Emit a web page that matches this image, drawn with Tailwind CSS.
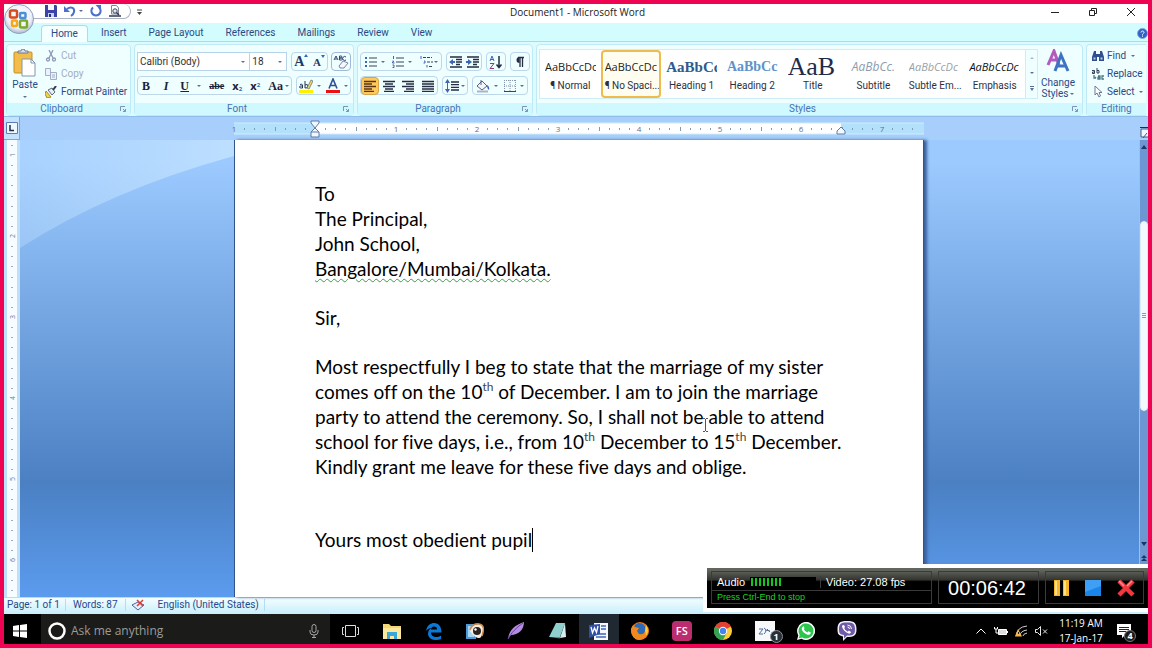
<!DOCTYPE html>
<html lang="en">
  <head>
    <meta charset="UTF-8" />
    <meta name="viewport" content="width=device-width, initial-scale=1.0" />
    <title>Document1 - Microsoft Word</title>
    <script src="https://cdn.jsdelivr.net/npm/@tailwindcss/browser@4"></script>
  </head>
  <body class="h-screen flex flex-col overflow-hidden border-4 border-[#ee0452] bg-white font-['Roboto',sans-serif] text-[10px] leading-3 text-[#2a4a86]">
    <!-- Word window -->
    <div class="relative flex-1 min-h-0 flex flex-col">
      <!-- Title bar -->
      <header class="relative h-[19px] shrink-0 flex items-center bg-white">
        <div class="ml-[26px] h-[15px] w-[101px] pl-[15px] mb-1 flex items-center gap-[7px] rounded-r-full border-b border-r border-[#a9b4c6]">
          <button aria-label="Save">
            <svg class="w-3 h-3" viewBox="0 0 12 12"><path d="M0 0h11l1 1v11H0z" fill="#3c43a6"/><path d="M3 0h6v5H3z" fill="#f4f6ff"/><path d="M3 8h6v4H3z" fill="#c8d2f2"/><path d="M4 9h2v3H4z" fill="#2b2f7c"/></svg>
          </button>
          <button aria-label="Undo" class="flex items-center gap-[3px]">
            <svg class="w-3 h-3" viewBox="0 0 12 12"><path d="M3 4c4-3 8-1 7 3-.4 2-1.500 3-3 4" fill="none" stroke="#4a72cc" stroke-width="2"/><path d="M0 1v6h6z" fill="#4a72cc"/></svg>
            <svg class="w-1 h-1" viewBox="0 0 4 4"><path d="M0 1h4L2 3z" fill="#5b6f96"/></svg>
          </button>
          <button aria-label="Repeat">
            <svg class="w-3 h-3" viewBox="0 0 12 12"><path d="M3 2.500C0 5 1.500 10.500 6 10.500S12 5 9 2.500" fill="none" stroke="#4a72cc" stroke-width="2"/><path d="M5.500 0H11v5.500z" fill="#4a72cc"/></svg>
          </button>
          <button aria-label="Print preview">
            <svg class="w-3 h-3" viewBox="0 0 12 12"><path d="M2.500.5h5l2 2.500v6h-7z" fill="#fff" stroke="#7d8799"/><circle cx="6" cy="6" r="2.200" fill="#dce8f7" stroke="#3c4658"/><path d="M7.500 7.500L10 10" stroke="#30384a" stroke-width="1.500"/><path d="M0 11h12" stroke="#30384a" stroke-width="1.500"/></svg>
          </button>
        </div>
        <svg class="ml-[6px] mb-1 w-[5px] h-2" viewBox="0 0 5 8"><path d="M0 2h5" stroke="#444"/><path d="M0 4h5L2.500 7z" fill="#444"/></svg>
        <h1 class="absolute inset-x-0 top-[2px] pl-[3px] text-center font-['Open_Sans',sans-serif] text-[#222] pointer-events-none">Document1 - Microsoft Word</h1>
        <div class="ml-auto mb-1 mr-[13px] flex items-center gap-[30px]">
          <button aria-label="Minimize"><svg class="w-2 h-2" viewBox="0 0 8 8"><path d="M0 4.500h8" stroke="#222"/></svg></button>
          <button aria-label="Restore"><svg class="w-2 h-2" viewBox="0 0 8 8"><path d="M.5 2.500h5v5h-5zM2.500 2V.5h5v5H6" fill="none" stroke="#222"/></svg></button>
          <button aria-label="Close"><svg class="w-2 h-2" viewBox="0 0 8 8"><path d="M0 0l8 8M8 0L0 8" stroke="#222"/></svg></button>
        </div>
      </header>

      <!-- Office button -->
      <button aria-label="Office" class="absolute z-10 left-0 top-0">
        <svg class="w-[31px] h-[31px]" viewBox="0 0 31 31">
          <defs><radialGradient id="orb" cx=".5" cy=".4" r=".6"><stop offset="0" stop-color="#fff"/><stop offset=".7" stop-color="#eef1f7"/><stop offset="1" stop-color="#a9b7cd"/></radialGradient></defs>
          <circle cx="15" cy="15" r="14.500" fill="url(#orb)" stroke="#8fa3c2"/>
          <g fill="none" stroke-width="2.500">
            <rect x="6" y="6.500" width="7" height="7" rx="1.500" stroke="#d8491c"/>
            <rect x="16" y="9" width="5.500" height="5" rx="1" stroke="#4c8fd8"/>
            <rect x="8" y="16.500" width="5" height="5.500" rx="1" stroke="#f3a91a"/>
            <rect x="16" y="16.500" width="7" height="7" rx="1.500" stroke="#7aa92c"/>
          </g>
        </svg>
      </button>

      <!-- Tabs -->
      <nav class="h-[19px] shrink-0 pt-[2px] pl-[37px] flex items-center bg-[#d3fcff] border-b border-[#a5dcee]">
        <a href="#" class="h-[17px] px-[9px] mr-[2px] flex items-center rounded-t-sm border border-b-0 border-[#a9dcee] bg-[#f4ffff]">Home</a>
        <a href="#" class="px-[11px]">Insert</a>
        <a href="#" class="px-[11px]">Page Layout</a>
        <a href="#" class="px-[11px]">References</a>
        <a href="#" class="px-[11px]">Mailings</a>
        <a href="#" class="px-[11px]">Review</a>
        <a href="#" class="px-[11px]">View</a>
        <button aria-label="Help" class="ml-auto"><svg class="w-[11px] h-[11px]" viewBox="0 0 11 11"><circle cx="5.500" cy="5.500" r="5" fill="#2e62c4" stroke="#7fa8e6"/><path d="M4 4.500c0-2 3-2 3 0 0 1-1.500 1-1.500 2.200M5.500 7.500v1.200" fill="none" stroke="#fff"/></svg></button>
      </nav>

      <!-- Ribbon -->
      <div class="h-[75px] shrink-0 pt-[2px] px-[2px] flex gap-[3px] bg-[#dbfbff] border-b border-[#8fbfe8] overflow-hidden">
        <!-- Clipboard -->
        <section class="w-[125px] shrink-0 flex flex-col rounded-sm border border-[#bfeaf5] bg-[#effeff]">
          <div class="flex-1 min-h-0 flex">
            <button class="w-9 pt-1 flex flex-col items-center">
              <svg class="w-6 h-7" viewBox="0 0 24 28"><rect x="1" y="3" width="18" height="21" rx="1" fill="#f2bd4a" stroke="#c58f26"/><path d="M5 4h10V2h-3a2 2 0 00-4 0H5z" fill="#d9dee6" stroke="#70798a"/><path d="M9 10h9l4 4v13H9z" fill="#fff" stroke="#8494ae"/><path d="M18 10v4h4" fill="none" stroke="#8494ae"/></svg>
              <span class="mt-[2px]">Paste</span>
              <svg class="mt-1 w-1 h-1" viewBox="0 0 4 4"><path d="M0 1h4L2 3z" fill="#5b6f96"/></svg>
            </button>
            <div class="pt-[2px] pl-[2px] flex flex-col">
              <button class="h-[18px] flex items-center gap-1 text-[#a3adbf]"><svg class="w-3 h-3" viewBox="0 0 12 12" fill="none" stroke="#8e99b5" stroke-width="1.300"><path d="M4 0l4 8M8 0L4 8"/><circle cx="3" cy="9.500" r="1.500"/><circle cx="9" cy="9.500" r="1.500"/></svg>Cut</button>
              <button class="h-[18px] flex items-center gap-1 text-[#a3adbf]"><svg class="w-3 h-3" viewBox="0 0 12 12" fill="#edf2fa" stroke="#a1aec8"><path d="M.5.5h5v7h-5zM5.500 4.500h6v7h-6z"/><path d="M7 7h3M7 9h3"/></svg>Copy</button>
              <button class="h-[18px] flex items-center gap-1 whitespace-nowrap"><svg class="w-3 h-3" viewBox="0 0 12 12"><path d="M1 5l5 6-4 1-2-4z" fill="#f5d34f" stroke="#a98a22"/><path d="M3 4l4 5 3-3-3-4z" fill="#e9edf4" stroke="#5d677c"/><path d="M8 4l3-4" stroke="#333c50" stroke-width="2"/></svg>Format Painter</button>
            </div>
          </div>
          <div class="h-3 shrink-0 flex items-center bg-[#d0f8ff] text-[#4873b4]">
            <span class="flex-1 text-center pr-1">Clipboard</span>
            <button aria-label="Clipboard options" class="pr-1"><svg class="w-[6px] h-[6px]" viewBox="0 0 6 6" fill="none" stroke="#7d93b8"><path d="M.5 5V.5H5M3 3l2.500 2.500M5.500 3v2.500H3"/></svg></button>
          </div>
        </section>

        <!-- Font -->
        <section class="w-[220px] shrink-0 flex flex-col rounded-sm border border-[#bfeaf5] bg-[#effeff]">
          <div class="flex-1 min-h-0 px-[2px] pt-[7px] flex flex-col gap-[5px]">
            <div class="h-[19px] flex items-center">
              <label class="relative w-[115px] h-[19px] flex items-center border border-[#b8d3e8] bg-white">
                <select aria-label="Font" class="w-full h-full px-[2px] appearance-none bg-transparent text-[#333]"><option>Calibri (Body)</option></select>
                <svg class="absolute right-1 w-1 h-1 pointer-events-none" viewBox="0 0 4 4"><path d="M0 1h4L2 3z" fill="#5b6f96"/></svg>
              </label>
              <label class="relative w-[37px] h-[19px] flex items-center border border-l-0 border-[#b8d3e8] bg-white">
                <select aria-label="Font size" class="w-full h-full px-[2px] appearance-none bg-transparent text-[#333]"><option>18</option></select>
                <svg class="absolute right-1 w-1 h-1 pointer-events-none" viewBox="0 0 4 4"><path d="M0 1h4L2 3z" fill="#5b6f96"/></svg>
              </label>
              <div class="ml-1 w-[38px] h-[19px] flex items-center justify-around rounded-sm border border-[#bcd6ea] font-['Liberation_Serif',serif] font-bold text-[#27385e]">
                <button aria-label="Grow font" class="flex items-start text-[14px] leading-4">A<svg class="w-1 h-1" viewBox="0 0 4 4"><path d="M0 3h4L2 0z" fill="#3566b8"/></svg></button>
                <button aria-label="Shrink font" class="flex items-start text-[11px] leading-4">A<svg class="w-1 h-1" viewBox="0 0 4 4"><path d="M0 1h4L2 4z" fill="#3566b8"/></svg></button>
              </div>
              <button aria-label="Clear formatting" class="ml-[3px] w-[20px] h-[19px] grid place-items-center rounded-sm border border-[#9fb9d8]">
                <svg class="w-4 h-4" viewBox="0 0 16 16"><path d="M1 6l2-4 2 4M2 5h2M6.500 2v4h2a1 1 0 000-2h-2 1.500a1 1 0 000-2zM13 3a2 2 0 100 3" fill="none" stroke="#33466e"/><path d="M6 12l4-5 5 2-4 5H7z" fill="#f6f7fc" stroke="#7886a8"/></svg>
              </button>
            </div>
            <div class="h-[19px] flex items-center">
              <div class="w-[155px] h-[19px] pl-[2px] pr-[2px] flex items-center justify-between rounded-sm border border-[#bcd6ea] font-['Liberation_Serif',serif] text-[12px] text-[#1a2238]">
                <button class="w-3 font-bold">B</button>
                <button class="w-3 font-bold italic">I</button>
                <button class="flex items-center gap-2 font-bold"><span class="underline">U</span><svg class="w-1 h-1" viewBox="0 0 4 4"><path d="M0 1h4L2 3z" fill="#5b6f96"/></svg></button>
                <button class="text-[10px] font-bold line-through">abe</button>
                <button class="font-bold font-['Open_Sans',sans-serif] text-[11px]">x<sub class="text-[6px] text-[#3566b8]">2</sub></button>
                <button class="font-bold font-['Open_Sans',sans-serif] text-[11px]">x<sup class="text-[6px] text-[#3566b8]">2</sup></button>
                <button class="flex items-center gap-[2px] font-bold">Aa<svg class="w-1 h-1" viewBox="0 0 4 4"><path d="M0 1h4L2 3z" fill="#5b6f96"/></svg></button>
              </div>
              <div class="ml-1 w-[55px] h-[19px] flex items-center justify-around rounded-sm border border-[#bcd6ea]">
                <button aria-label="Highlight" class="flex items-center gap-1"><svg class="w-[14px] h-4" viewBox="0 0 14 16"><path d="M0 12h14v3H0z" fill="#fdf000"/><path d="M1 6.500q2-1 2.500.5v3q-3 .5-3-1t3-1M6 3v7q3 .5 3-2T6 7" fill="none" stroke="#2a3658"/><path d="M8 10l4-8 2 1-4 8z" fill="#f6d860" stroke="#5a6275" stroke-width=".7"/></svg><svg class="w-1 h-1" viewBox="0 0 4 4"><path d="M0 1h4L2 3z" fill="#5b6f96"/></svg></button>
                <button aria-label="Font color" class="flex items-center gap-1"><svg class="w-[14px] h-4" viewBox="0 0 14 16"><path d="M0 12h14v3H0z" fill="#ee1111"/><path d="M3 10.500L7 1l4 9.500M4.500 7.500h5" fill="none" stroke="#2c4f96" stroke-width="1.600"/></svg><svg class="w-1 h-1" viewBox="0 0 4 4"><path d="M0 1h4L2 3z" fill="#5b6f96"/></svg></button>
              </div>
            </div>
          </div>
          <div class="h-3 shrink-0 flex items-center bg-[#d0f8ff] text-[#4873b4]">
            <span class="flex-1 text-center pr-1">Font</span>
            <button aria-label="Font options" class="pr-1"><svg class="w-[6px] h-[6px]" viewBox="0 0 6 6" fill="none" stroke="#7d93b8"><path d="M.5 5V.5H5M3 3l2.500 2.500M5.500 3v2.500H3"/></svg></button>
          </div>
        </section>

        <!-- Paragraph -->
        <section class="w-[176px] shrink-0 flex flex-col rounded-sm border border-[#bfeaf5] bg-[#effeff]">
          <div class="flex-1 min-h-0 px-[2px] pt-[7px] flex flex-col gap-[5px]">
            <div class="h-[19px] flex items-center gap-1">
              <div class="w-[83px] h-[19px] flex items-center justify-around rounded-sm border border-[#bcd6ea]">
                <button aria-label="Bullets" class="flex items-center gap-1"><svg class="w-3 h-3" viewBox="0 0 12 12"><path d="M0 1h2v2H0zM0 5h2v2H0zM0 9h2v2H0z" fill="#3c65b4"/><path d="M4 2h8M4 6h8M4 10h8" stroke="#39435c"/></svg><svg class="w-1 h-1" viewBox="0 0 4 4"><path d="M0 1h4L2 3z" fill="#5b6f96"/></svg></button>
                <button aria-label="Numbering" class="flex items-center gap-1"><svg class="w-3 h-3" viewBox="0 0 12 12"><path d="M1.500 0v3M.5 5h1v1h-1v1h2M.5 9h1.500v2.500H.5" fill="none" stroke="#3c65b4"/><path d="M4 2h8M4 6h8M4 10h8" stroke="#39435c"/></svg><svg class="w-1 h-1" viewBox="0 0 4 4"><path d="M0 1h4L2 3z" fill="#5b6f96"/></svg></button>
                <button aria-label="Multilevel list" class="flex items-center"><svg class="w-[14px] h-3" viewBox="0 0 14 12"><path d="M1 0v3M4 5h1v2H3.500M7 9v2.500" fill="none" stroke="#3c65b4"/><path d="M3 1.500h9M7 6h6M9 10.500h4" stroke="#39435c" stroke-dasharray="3 1"/></svg><svg class="w-1 h-1" viewBox="0 0 4 4"><path d="M0 1h4L2 3z" fill="#5b6f96"/></svg></button>
              </div>
              <div class="w-9 h-[19px] flex items-center justify-around rounded-sm border border-[#bcd6ea]">
                <button aria-label="Decrease indent"><svg class="w-[14px] h-3" viewBox="0 0 14 12"><path d="M1 1h12M7 3.500h6M7 6h6M7 8.500h4M1 11h12" stroke="#252d42" stroke-width="1.300"/><path d="M0 6l4-3v2h2v2H4v2z" fill="#3c65b4"/></svg></button>
                <button aria-label="Increase indent"><svg class="w-[14px] h-3" viewBox="0 0 14 12"><path d="M1 1h12M7 3.500h6M7 6h6M7 8.500h4M1 11h12" stroke="#252d42" stroke-width="1.300"/><path d="M6 6L2 3v2H0v2h2v2z" fill="#3c65b4"/></svg></button>
              </div>
              <button aria-label="Sort" class="w-5 h-[19px] grid place-items-center rounded-sm border border-[#bcd6ea]"><svg class="w-[14px] h-[14px]" viewBox="0 0 14 14" fill="none"><path d="M1 6l2-5 2 5M1.500 4.500h3" stroke="#3c65b4"/><path d="M1 8.500h4l-4 5h4" stroke="#8b3b86"/><path d="M10 1v11M7.500 9.500L10 12.500l2.500-3" stroke="#252d42" stroke-width="1.500"/></svg></button>
              <button aria-label="Show marks" class="w-5 h-[19px] grid place-items-center rounded-sm border border-[#bcd6ea]"><svg class="w-3 h-3" viewBox="0 0 12 12"><path d="M5.500 7A3 3 0 015.500 1z" fill="#252d42"/><path d="M4 1.500h6M6 1v10M8.500 1v10" stroke="#252d42" stroke-width="1.300"/></svg></button>
            </div>
            <div class="h-[19px] flex items-center gap-1">
              <div class="w-[78px] h-[19px] flex items-center rounded-sm border border-[#bcd6ea]">
                <button aria-label="Align left" class="w-[18px] h-[18px] grid place-items-center rounded-sm border border-[#d9a54a] bg-[#ffc95c]"><svg class="w-3 h-3" viewBox="0 0 12 12"><path d="M0 1.500h12M0 4h8M0 6.500h12M0 9h8M0 11.500h10" stroke="#5b3413" stroke-width="1.300"/></svg></button>
                <button aria-label="Center" class="w-[20px] grid place-items-center"><svg class="w-3 h-3" viewBox="0 0 12 12"><path d="M0 1.500h12M2 4h8M0 6.500h12M2 9h8M1 11.500h10" stroke="#252d42" stroke-width="1.300"/></svg></button>
                <button aria-label="Align right" class="w-[20px] grid place-items-center"><svg class="w-3 h-3" viewBox="0 0 12 12"><path d="M0 1.500h12M4 4h8M0 6.500h12M4 9h8M2 11.500h10" stroke="#252d42" stroke-width="1.300"/></svg></button>
                <button aria-label="Justify" class="w-[19px] grid place-items-center"><svg class="w-3 h-3" viewBox="0 0 12 12"><path d="M0 1.500h12M0 4h12M0 6.500h12M0 9h12M0 11.500h12" stroke="#252d42" stroke-width="1.300"/></svg></button>
              </div>
              <button aria-label="Line spacing" class="w-[26px] h-[19px] flex items-center justify-center gap-[2px] rounded-sm border border-[#bcd6ea]"><svg class="w-[14px] h-[14px]" viewBox="0 0 14 14"><path d="M2.500 1v12" stroke="#3c65b4"/><path d="M0 4l2.500-4L5 4zM0 10l2.500 4L5 10z" fill="#3c65b4"/><path d="M6 3h8M6 5.700h8M6 8.400h8M6 11h8" stroke="#252d42" stroke-width="1.300"/></svg><svg class="w-1 h-1" viewBox="0 0 4 4"><path d="M0 1h4L2 3z" fill="#5b6f96"/></svg></button>
              <div class="w-[56px] h-[19px] flex items-center justify-around rounded-sm border border-[#bcd6ea]">
                <button aria-label="Shading" class="flex items-center gap-1"><svg class="w-[14px] h-[14px]" viewBox="0 0 14 14"><path d="M1 7l5-5 5 5-5 4z" fill="#f3f6fb" stroke="#55627f"/><path d="M5 1v5" stroke="#55627f"/><path d="M11 6q3 2 2 5-2-1-2-5" fill="#3c65b4"/><path d="M1 12.500h11" stroke="#aab4c6" stroke-width="2"/></svg><svg class="w-1 h-1" viewBox="0 0 4 4"><path d="M0 1h4L2 3z" fill="#5b6f96"/></svg></button>
                <button aria-label="Borders" class="flex items-center gap-1"><svg class="w-3 h-3" viewBox="0 0 12 12"><path d="M.5 0v12M6 0v12M11.500 0v12M0 .5h12M0 6h12" stroke="#8593ac" stroke-dasharray="1 1"/><path d="M0 11.500h12" stroke="#39435c"/></svg><svg class="w-1 h-1" viewBox="0 0 4 4"><path d="M0 1h4L2 3z" fill="#5b6f96"/></svg></button>
              </div>
            </div>
          </div>
          <div class="h-3 shrink-0 flex items-center bg-[#d0f8ff] text-[#4873b4]">
            <span class="flex-1 text-center pr-1">Paragraph</span>
            <button aria-label="Paragraph options" class="pr-1"><svg class="w-[6px] h-[6px]" viewBox="0 0 6 6" fill="none" stroke="#7d93b8"><path d="M.5 5V.5H5M3 3l2.500 2.500M5.500 3v2.500H3"/></svg></button>
          </div>
        </section>

        <!-- Styles -->
        <section class="flex-1 min-w-0 flex flex-col rounded-sm border border-[#bfeaf5] bg-[#effeff]">
          <div class="flex-1 min-h-0 pl-[2px] pr-1 pt-1 flex">
            <div class="flex-1 min-w-0 h-[50px] flex border border-[#cdeef6] bg-white">
              <div class="flex-1 min-w-0 grid grid-cols-8 text-center text-[#2b3142]">
                <button class="min-w-0 px-[3px] pt-[3px] flex flex-col justify-start overflow-hidden whitespace-nowrap border-2 border-transparent"><span class="block h-6 leading-6 overflow-hidden text-left font-['Open_Sans',sans-serif] text-[11px] text-[#222]">AaBbCcDc</span><span class="block pt-px">¶ Normal</span></button>
                <button class="min-w-0 px-[2px] pt-[3px] flex flex-col justify-start overflow-hidden whitespace-nowrap rounded-sm border-2 border-[#eebb4c] bg-[#fffdf0]"><span class="block h-6 leading-6 overflow-hidden text-left font-['Open_Sans',sans-serif] text-[11px] text-[#222]">AaBbCcDc</span><span class="block pt-px">¶ No Spaci...</span></button>
                <button class="min-w-0 px-[3px] pt-[3px] flex flex-col justify-start overflow-hidden whitespace-nowrap border-2 border-transparent"><span class="block h-6 leading-6 overflow-hidden text-left font-['Liberation_Serif',serif] font-bold text-[15px] text-[#2f5a8c]">AaBbCc</span><span class="block pt-px">Heading 1</span></button>
                <button class="min-w-0 px-[3px] pt-[3px] flex flex-col justify-start overflow-hidden whitespace-nowrap border-2 border-transparent"><span class="block h-6 leading-6 overflow-hidden text-left font-['Liberation_Serif',serif] font-bold text-[14px] text-[#5e92cc]">AaBbCc</span><span class="block pt-px">Heading 2</span></button>
                <button class="min-w-0 px-[3px] pt-[3px] flex flex-col justify-start overflow-hidden whitespace-nowrap border-2 border-transparent"><span class="block h-6 leading-6 overflow-hidden text-left font-['Liberation_Serif',serif] text-[26px] text-[#1e2b4a]">AaB</span><span class="block pt-px">Title</span></button>
                <button class="min-w-0 px-[3px] pt-[3px] flex flex-col justify-start overflow-hidden whitespace-nowrap border-2 border-transparent"><span class="block h-6 leading-6 overflow-hidden font-['Open_Sans',sans-serif] italic text-[12px] text-[#8c9cb0]">AaBbCc.</span><span class="block pt-px">Subtitle</span></button>
                <button class="min-w-0 px-[3px] pt-[3px] flex flex-col justify-start overflow-hidden whitespace-nowrap border-2 border-transparent"><span class="block h-6 leading-6 overflow-hidden text-left font-['Open_Sans',sans-serif] italic text-[11px] text-[#9a9fa8]">AaBbCcDc</span><span class="block pt-px">Subtle Em...</span></button>
                <button class="min-w-0 px-[3px] pt-[3px] flex flex-col justify-start overflow-hidden whitespace-nowrap border-2 border-transparent"><span class="block h-6 leading-6 overflow-hidden text-left font-['Open_Sans',sans-serif] italic text-[11px] text-[#111]">AaBbCcDc</span><span class="block pt-px">Emphasis</span></button>
              </div>
              <div class="w-3 flex flex-col items-center justify-around border-l border-[#cdeef6] bg-[#effeff]">
                <button aria-label="Previous styles"><svg class="w-1 h-1" viewBox="0 0 4 4"><path d="M0 3h4L2 1z" fill="#a9b6cc"/></svg></button>
                <button aria-label="Next styles"><svg class="w-1 h-1" viewBox="0 0 4 4"><path d="M0 1h4L2 3z" fill="#5b6f96"/></svg></button>
                <button aria-label="More styles"><svg class="w-1 h-[6px]" viewBox="0 0 4 6"><path d="M0 .5h4" stroke="#5b6f96"/><path d="M0 2h4L2 5z" fill="#5b6f96"/></svg></button>
              </div>
            </div>
            <button class="w-10 flex flex-col items-center justify-start">
              <svg class="w-6 h-6 shrink-0" viewBox="0 0 24 24" fill="none" stroke-width="3"><path d="M2 16L8 2l5 14M4 11h8" stroke="#b35bbb"/><path d="M9 22l6-16 7 16M11 17h9" stroke="#3f72c0"/></svg>
              <span class="mt-1 leading-[11px]">Change</span>
              <span class="flex items-center gap-[2px] leading-[11px]">Styles<svg class="w-1 h-1" viewBox="0 0 4 4"><path d="M0 1h4L2 3z" fill="#5b6f96"/></svg></span>
            </button>
          </div>
          <div class="h-3 shrink-0 flex items-center bg-[#d0f8ff] text-[#4873b4]">
            <span class="flex-1 text-center pr-1">Styles</span>
            <button aria-label="Styles options" class="pr-1"><svg class="w-[6px] h-[6px]" viewBox="0 0 6 6" fill="none" stroke="#7d93b8"><path d="M.5 5V.5H5M3 3l2.500 2.500M5.500 3v2.500H3"/></svg></button>
          </div>
        </section>

        <!-- Editing -->
        <section class="w-[60px] shrink-0 flex flex-col rounded-l-sm border border-r-0 border-[#bfeaf5] bg-[#effeff]">
          <div class="flex-1 min-h-0 pt-[2px] pl-[5px] flex flex-col whitespace-nowrap">
            <button class="h-[18px] flex items-center gap-[3px]"><svg class="w-3 h-3 shrink-0" viewBox="0 0 12 12"><path d="M2 1h2v3h4V1h2l2 6v4H7V7H5v4H0V7z" fill="#2f4f8e"/><path d="M1.500 7.500h2v2h-2zM8.500 7.500h2v2h-2z" fill="#b9cdf0"/></svg>Find<svg class="ml-[2px] w-1 h-1" viewBox="0 0 4 4"><path d="M0 1h4L2 3z" fill="#5b6f96"/></svg></button>
            <button class="h-[18px] flex items-center gap-[3px]"><svg class="w-3 h-3 shrink-0" viewBox="0 0 12 12" fill="none"><path d="M0 2.500h2.500v3H.5v-1.500h2M5 0v5h2V2.500H5" stroke="#333f5c"/><path d="M2 7v3h2M4 9l-1 1M6 8h2v3H6V9.500h2M12 8h-2v3h2" stroke="#4c7a86" stroke-width="1.300"/></svg>Replace</button>
            <button class="h-[18px] flex items-center gap-[3px]"><svg class="w-3 h-3 shrink-0" viewBox="0 0 12 12"><path d="M3 0v9l2-2 2 4 1.500-1L7 6.500h3z" fill="#fff" stroke="#6c7a96"/></svg>Select<svg class="ml-[2px] w-1 h-1" viewBox="0 0 4 4"><path d="M0 1h4L2 3z" fill="#5b6f96"/></svg></button>
          </div>
          <div class="h-3 shrink-0 grid place-items-center bg-[#d0f8ff] text-[#4873b4]">Editing</div>
        </section>
      </div>

      <!-- Horizontal ruler -->
      <div class="h-[23px] shrink-0 flex bg-[#a8cffb]">
        <button aria-label="Tab stop" class="w-4 flex items-center justify-center border-b border-r border-[#7fa6d8] bg-[#c4e2fb]"><svg class="w-3 h-3" viewBox="0 0 12 12"><path d="M.5.5h11v11H.5z" fill="#eef8ff" stroke="#5b7cb4"/><path d="M4 3v5.500h4" fill="none" stroke="#222c44" stroke-width="1.500"/></svg></button>
        <div class="flex-1 flex justify-center pt-1 pr-px">
          <svg id="hruler" class="w-[690px] h-[18px] overflow-visible font-['Open_Sans',sans-serif] text-[8px]" viewBox="0 0 690 18"></svg>
        </div>
        <button aria-label="View ruler" class="w-[9px] pt-2 overflow-hidden"><svg class="w-[10px] h-[12px]" viewBox="0 0 10 12"><path d="M2 2h8v8H2z" fill="#eef6ff" stroke="#44587e"/><path d="M4 11l4-5" stroke="#44587e"/><path d="M1 0h9" stroke="#1c2e55" stroke-width="2"/></svg></button>
      </div>

      <!-- Workspace -->
      <div class="flex-1 min-h-0 flex bg-linear-to-b from-[#9ccaff] from-5% via-[#4b80c3] via-75% to-[#5b9bee]">
        <div class="w-4 shrink-0 px-[3px] bg-[#bfe0fb]">
          <svg id="vruler" class="w-[10px] h-full bg-[#f6fcff] font-['Open_Sans',sans-serif] text-[7px]"></svg>
        </div>
        <main class="relative flex-1 min-w-0 flex justify-center pr-px">
          <svg class="absolute left-0 top-0 w-[214px] h-[110px]" viewBox="0 0 214 110" preserveAspectRatio="none">
            <defs><linearGradient id="sweep" x1="0" y1="0" x2="1" y2="0"><stop offset="0" stop-color="#bfe0ff" stop-opacity=".35"/><stop offset="1" stop-color="#c8e6ff" stop-opacity=".75"/></linearGradient></defs>
            <path d="M0 0h214v16Q90 50 0 108z" fill="url(#sweep)"/>
          </svg>
          <article contenteditable="true" spellcheck="false" class="relative w-[690px] h-full overflow-hidden pl-[80px] pr-16 pt-[41px] bg-white border-x border-[#33558c] shadow-[3px_0_3px_#3a5f9c] font-['Lato',sans-serif] text-[19px] leading-[25px] text-black outline-none [font-variant-ligatures:none]">
            <p>To</p>
            <p>The Principal,</p>
            <p>John School,</p>
            <p><span class="underline decoration-wavy decoration-[#3f9a4d] decoration-1 underline-offset-2">Bangalore/Mumbai/Kolkata.</span></p>
            <p class="h-6"></p>
            <p>Sir,</p>
            <p class="h-6"></p>
            <p class="whitespace-nowrap">Most respectfully I beg to state that the marriage of my sister<br />comes off on the 10<sup class="-top-2 text-[12px] text-[#444]">th</sup> of December. I am to join the marriage<br />party to attend the ceremony. So, I shall not be able to attend<br />school for five days, i.e., from 10<sup class="-top-2 text-[12px] text-[#444]">th</sup> December to 15<sup class="-top-2 text-[12px] text-[#444]">th</sup> December.<br />Kindly grant me leave for these five days and oblige.</p>
            <p class="h-6"></p>
            <p class="h-6"></p>
            <p class="flex items-center">Yours most obedient pupil<span class="w-px h-6 bg-black"></span></p>
          </article>
          <!-- Mouse pointer -->
          <svg class="absolute left-[682px] top-[278px] w-[7px] h-[14px]" viewBox="0 0 7 14"><path d="M1 .5h2M4 .5h2M3.500 1v12M1 13.500h2M4 13.500h2" fill="none" stroke="#555"/></svg>
        </main>
        <!-- Scrollbar -->
        <div class="w-[9px] shrink-0 flex flex-col items-center bg-[#6d97d2] border-l border-[#9cc0ee]">
          <button aria-label="Scroll up" class="h-[14px]"><svg class="w-2 h-2" viewBox="0 0 8 8"><path d="M1 6h6L4 2z" fill="#1d3764"/></svg></button>
          <div class="h-[67px]"></div>
          <div class="w-full h-[190px] grid place-items-center rounded-sm border border-[#dcebfb] bg-[#f2f9ff]"><svg class="w-1 h-2" viewBox="0 0 4 8"><path d="M0 1.500h4M0 3.500h4M0 5.500h4" stroke="#7e9cc8"/></svg></div>
          <div class="flex-1"></div>
          <button aria-label="Scroll down" class="h-[14px]"><svg class="w-2 h-2" viewBox="0 0 8 8"><path d="M1 2h6L4 6z" fill="#1d3764"/></svg></button>
          <button aria-label="Previous page" class="h-[14px] mb-8"><svg class="w-2 h-2" viewBox="0 0 8 8"><path d="M1 4h6L4 1zM1 7h6L4 4z" fill="#1d3764"/></svg></button>
        </div>
      </div>

      <!-- Status bar -->
      <footer class="h-[17px] shrink-0 pb-[2px] flex items-center bg-linear-to-b from-[#f4feff] to-[#c8eefc] border-t border-[#b5dcf2] text-[#27478e]">
        <span class="px-[3px] pr-[5px] border-r border-[#b5dcf2]">Page: 1 of 1</span>
        <span class="px-[7px] border-r border-[#b5dcf2]">Words: 87</span>
        <svg class="ml-[6px] mr-[13px] w-[13px] h-3" viewBox="0 0 13 12"><path d="M0 6l6-3 6 3-6 5z" fill="#e8eefb" stroke="#4a61a6"/><path d="M5 1l6 6M11 1L5 7" stroke="#dc3b2f" stroke-width="1.500"/></svg>
        <span class="pr-[5px] border-r border-[#b5dcf2]">English (United States)</span>
      </footer>

      <!-- Screen recorder -->
      <aside class="absolute right-0 bottom-[2px] pt-1 pb-1 pl-1 bg-white">
        <div class="h-10 w-[441px] p-1 pt-[3px] flex gap-[6px] bg-linear-to-b from-[#63655f] from-5% via-[#33342f] via-30% to-black to-35% font-['Liberation_Sans',sans-serif] text-white">
          <div class="w-[221px] flex flex-col border border-[#3a3a3a]">
            <div class="h-[20px] pt-px flex items-center border-b border-[#3a3a3a] text-[11px]">
              <span class="w-[38px] pl-[5px]">Audio</span>
              <span id="levels" class="w-[66px] h-[10px] px-px flex items-center gap-[2px] bg-black"></span>
              <span class="ml-1 pl-[5px] border-l border-[#3a3a3a]">Video: 27.08 fps</span>
            </div>
            <div class="pl-[5px] text-[9px] leading-3 text-[#15d321]">Press Ctrl-End to stop</div>
          </div>
          <div class="w-[101px] pr-[3px] grid place-items-center border border-[#3a3a3a] text-xl leading-5">00:06:42</div>
          <div class="flex-1 flex items-center justify-around border border-[#3a3a3a]">
            <button aria-label="Pause"><svg class="w-[15px] h-4" viewBox="0 0 15 16"><path d="M0 0h6v16H0zM9 0h6v16H9z" fill="#f7b52b"/><path d="M1 1h2v14H1zM10 1h2v14h-2z" fill="#ffe08a"/></svg></button>
            <button aria-label="Stop"><svg class="w-4 h-4" viewBox="0 0 16 16"><path d="M0 0h16v16H0z" fill="#1b86ea"/><path d="M0 0h16v6L0 12z" fill="#3f9ff4"/></svg></button>
            <button aria-label="Cancel"><svg class="w-[18px] h-[18px]" viewBox="0 0 18 18"><path d="M2 2l14 14M16 2L2 16" stroke="#f2383e" stroke-width="4.500"/><path d="M2 2l5 5M15 2l-5 5" stroke="#ff8d8d" stroke-width="1.500"/></svg></button>
          </div>
        </div>
      </aside>
    </div>

    <!-- Taskbar -->
    <div class="h-[30px] shrink-0 flex items-center bg-black font-['Open_Sans',sans-serif] text-white">
      <button aria-label="Start" class="w-[37px] pl-[9px] pt-1"><svg class="w-[14px] h-[14px]" viewBox="0 0 14 14"><path d="M0 2l6-1v5.500H0zM7 1l7-1v6.500H7zM0 7.500h6V13l-6-1zM7 7.500h7V14l-7-1z" fill="#fff"/></svg></button>
      <label class="w-[289px] h-full pl-[7px] pr-[10px] pt-1 flex items-center gap-[5px] bg-[#1b1c19]">
        <svg class="w-[18px] h-[18px] shrink-0" viewBox="0 0 18 18"><circle cx="9" cy="9" r="7.500" fill="none" stroke="#fff" stroke-width="2.500"/></svg>
        <input type="text" aria-label="Search" placeholder="Ask me anything" class="flex-1 min-w-0 text-xs bg-transparent outline-none placeholder:text-[#9a9b98]" />
        <svg class="w-3 h-[14px] shrink-0" viewBox="0 0 12 14" fill="none" stroke="#a6a7a4"><rect x="4" y=".5" width="4" height="8" rx="2"/><path d="M2 6v2q0 3 4 3t4-3V6M6 11v2.500M4 13.500h4"/></svg>
      </label>
      <nav class="w-[538px] h-full pt-1 grid grid-cols-13 place-items-center">
        <button aria-label="Task view"><svg class="w-[17px] h-[14px]" viewBox="0 0 17 14" fill="none" stroke="#ddd"><path d="M3.500 1.500h10v11h-10zM2 3.500H.5v7H2M15 3.500h1.500v7H15"/></svg></button>
        <button aria-label="File Explorer"><svg class="w-[18px] h-4" viewBox="0 0 18 16"><path d="M0 1h6l2 2h10v13H0z" fill="#f6d873"/><path d="M0 5h18v11H0z" fill="#fbe89c"/><path d="M4 9h10v7h-3v-3H7v3H4z" fill="#3ba6dc"/></svg></button>
        <button aria-label="Edge"><svg class="w-[17px] h-[17px]" viewBox="0 0 17 17"><path d="M1 8C2 2 6 0 9 0c5 0 7.500 4 7.500 9.500H6c0 3 2.500 4.500 5 4.500 2 0 3.500-.5 5-1.500V16c-2 .8-3.500 1-5.500 1C5.500 17 3 14 3 10.500 3 8 4.500 6 6.500 5 4 5 2 6.500 1 8zm5-1.500h6C12 4.500 11 3.500 9 3.500S6.200 5 6 6.500z" fill="#0a78d6"/></svg></button>
        <button aria-label="Screen recorder"><svg class="w-[18px] h-[18px]" viewBox="0 0 18 18"><path d="M0 2h10v15H0z" fill="#4d9ad6"/><path d="M2 4h6v11H2z" fill="#a7d5f4"/><path d="M4 9Q6 3 12 2t5 7-5 7-8-7z" fill="#f6eee2"/><path d="M4 8Q6 1 13 2t3 12" fill="none" stroke="#c98b52" stroke-width="1.500"/><circle cx="11" cy="9" r="4" fill="#2b211d"/><circle cx="9.500" cy="7.500" r="1.200" fill="#fff"/></svg></button>
        <button aria-label="Feather"><svg class="w-[18px] h-[18px]" viewBox="0 0 18 18"><path d="M1 17C2 8 8 3 17 0c0 8-6 13-13 13z" fill="#b48be0"/><path d="M1 17C4 11 9 6 16 1" fill="none" stroke="#6a3fa6"/></svg></button>
        <button aria-label="Notepad"><svg class="w-[18px] h-4" viewBox="0 0 18 16"><path d="M7 0h9l-5 14H0z" fill="#8fd0cf"/><path d="M16 0l1 14-6 1z" fill="#d4efee"/><path d="M0 14l11 0 0 1.500z" fill="#4e8f90"/></svg></button>
        <button aria-label="Word" class="w-10 h-[30px] -mt-1 pt-1 grid place-items-center bg-[#202831]"><svg class="w-[19px] h-[17px]" viewBox="0 0 19 17"><path d="M5 0h14v17H5z" fill="#f5f8ff"/><path d="M12 3h5M12 6h5M7 11h10M7 14h10" stroke="#4165b4" stroke-width="1.500"/><path d="M0 2l11-1v10l-11 4z" fill="#2f4fa8"/><path d="M2 4l1.500 6 2-5 2 4.500L9 3" fill="none" stroke="#fff" stroke-width="1.300"/></svg></button>
        <button aria-label="Firefox"><svg class="w-[18px] h-[18px]" viewBox="0 0 18 18"><circle cx="9" cy="9" r="9" fill="#ee7a1c"/><circle cx="8.500" cy="7" r="6" fill="#2d6ab8"/><path d="M0 7l2-4 2 2 4 1-2 3 2 3c4 1 6-1 7-4 2 5-2 10-7 10S0 13 0 7z" fill="#f08a1f"/><path d="M15 3q4 6 0 11 0-3-1-5z" fill="#fccf3a"/></svg></button>
        <button aria-label="FS" class="w-5 h-5 rounded-sm bg-[#bb2d6e] text-[11px] leading-5 font-semibold">FS</button>
        <button aria-label="Chrome"><svg class="w-[18px] h-[18px]" viewBox="0 0 18 18"><circle cx="9" cy="9" r="9" fill="#fccd34"/><path d="M9 9L1.200 4.500A9 9 0 0116.800 4.500z" fill="#e34133"/><path d="M9 9L1.200 4.500A9 9 0 009 18l3.500-7z" fill="#35a353"/><path d="M9 5h8l-.5-1A9 9 0 009 0z" fill="#e34133"/><circle cx="9" cy="9" r="4.200" fill="#fff"/><circle cx="9" cy="9" r="3.200" fill="#4384f0"/></svg></button>
        <button aria-label="Sketch" class="relative w-5 h-5 bg-[#f7f8fa]">
          <svg class="w-5 h-5" viewBox="0 0 20 20" fill="none" stroke="#4c6f9c"><path d="M4 8h4l-4 5h4M9 7q4 2 0 6M12 8l3 3M10 9l5 1"/></svg>
          <span class="absolute -right-2 -bottom-[2px] w-[13px] h-[13px] rounded-full border border-[#8a8f98] bg-[#2a2f38] text-[9px] leading-[11px] font-bold">1</span>
        </button>
        <button aria-label="WhatsApp"><svg class="w-[18px] h-[18px]" viewBox="0 0 18 18"><path d="M0 18l1.300-4.600A9 9 0 1113 17a9 9 0 01-8.500-.3z" fill="#fff"/><path d="M1.800 16.200l.9-3.200A7.500 7.500 0 115.200 15.400z" fill="#2cc64f"/><path d="M6 4.500c.6-.4 1 0 1.500 1.700L6.800 7.300q1.200 2.400 3.600 3.200l1.100-1.200 2.300 1.200c0 2-2 2.700-3.300 2.200C7 11.500 5 9 4.700 7 4.700 5.800 5.300 5 6 4.500z" fill="#fff"/></svg></button>
        <button aria-label="Viber"><svg class="w-5 h-5" viewBox="0 0 20 20"><path d="M10 0c8 0 9.500 2.500 9.500 8.500S17 16 10 16l-4 4v-4.500C1.500 14.500.5 13 .5 8.500.5 2.500 2 0 10 0z" fill="#f2effb"/><path d="M10 1.500c6.500 0 8 1.800 8 7s-2 6.200-8 6L7 17.500V14c-4-.5-5-2-5-5.500C2 3.300 3.500 1.500 10 1.500z" fill="#6f5aa8"/><path d="M6.500 4c.7 0 1.200 1 1.500 2l-.8 1Q8 9.700 10.800 10.700l1-1.200 2.200 1.500c-.3 1.500-1.500 2-2.500 1.600C8 11 5.500 8 5 5.500 5 4.500 5.800 4 6.500 4z" fill="#fff"/><path d="M10.500 4q4 .5 4 4M10.500 6q2 .2 2 2" fill="none" stroke="#fff"/></svg></button>
      </nav>
      <div class="ml-auto pt-1 flex items-center">
        <button aria-label="Show hidden icons"><svg class="w-[10px] h-[6px]" viewBox="0 0 10 6"><path d="M.5 5.500L5 1l4.500 4.500" fill="none" stroke="#fff"/></svg></button>
        <svg class="ml-2 w-[14px] h-[10px]" viewBox="0 0 14 10" fill="none" stroke="#fff"><path d="M4.500 3.500h8v5h-8z" fill="#ddd"/><path d="M13.500 5v2M.5 1v2h3V1M2 3v4h2"/></svg>
        <svg class="ml-[7px] w-[13px] h-3" viewBox="0 0 13 12" fill="none"><path d="M1 11Q2 2 12 1M5 11q0-5 7-6M8 11q0-2 4-3" stroke="#cfcfcf"/><path d="M3 4l4 7.500H0z" fill="#f6b93a"/><path d="M3.500 7v2" stroke="#222"/></svg>
        <svg class="ml-[7px] w-[13px] h-[10px]" viewBox="0 0 13 10" fill="none" stroke="#e8e8e8"><path d="M.5 3.500h2l3-3v9l-3-3h-2zM8 3.500l4 4M12 3.500l-4 4"/></svg>
        <div class="ml-[10px] w-[46px] text-center leading-[15px] whitespace-nowrap">11:19 AM<br />17-Jan-17</div>
        <button aria-label="Notifications" class="relative ml-[13px] mr-[17px]"><svg class="w-[14px] h-[14px]" viewBox="0 0 14 14"><path d="M0 0h14v11H8l-3 3v-3H0z" fill="#fff"/><path d="M2 3.500h10M2 5.500h10M2 7.500h7" stroke="#222"/></svg><span class="absolute -right-[5px] -bottom-1 w-3 h-3 rounded-full border border-[#777] bg-[#1b1b1b] text-[9px] leading-[10px] font-bold">4</span></button>
      </div>
    </div>

    <script>
      const INCH = 81;

      // horizontal ruler: 1in margin on the left, 6.5in of text
      function drawHorizontalRuler() {
        let out = `<rect width="690" height="11" y="2" fill="#b3e0fb"/><rect x="81" width="526" height="11" y="2" fill="#fff"/>`;
        out += `<path d="M0 2h690M0 13h690" stroke="#cdeefd"/>`;
        for (let i = 1; i < 68; i++) {
          const x = 81 + ((i - 8) * INCH) / 8;
          if (x > 688) break;
          if (i % 8 === 0) continue;
          const h = i % 4 === 0 ? 4 : 2;
          out += `<path d="M${Math.round(x) + 0.5} ${8 - h / 2}v${h}" stroke="#8598b5"/>`;
        }
        for (let n = -1; n <= 7; n++) {
          if (n === 0) continue;
          out += `<text x="${81 + n * INCH}" y="11" text-anchor="middle" fill="#5c6f92">${Math.abs(n)}</text>`;
        }
        out += `<path d="M77 0h8v2l-4 5 4 4v5h-8v-5l4-4-4-5zM77 11h8" fill="#f1f8ff" stroke="#5f7ba8"/>`;
        out += `<path d="M603 13v-3l4-4 4 4v3z" fill="#f1f8ff" stroke="#5f7ba8"/>`;
        document.getElementById("hruler").innerHTML = out;
      }

      function drawVerticalRuler() {
        let out = "";
        for (let i = 0; i < 46; i++) {
          const y = 15 + ((i - 1) * INCH) / 8;
          if (i % 8 === 1) {
            out += `<text transform="translate(8 ${Math.round(y)}) rotate(-90)" text-anchor="middle" fill="#6c7f9f">${(i - 1) / 8 + 1}</text>`;
          } else {
            out += `<path d="M4 ${Math.round(y) + 0.5}h2" stroke="#9aabc4"/>`;
          }
        }
        document.getElementById("vruler").innerHTML = out;
      }

      function drawLevels(count) {
        const box = document.getElementById("levels");
        for (let i = 0; i < count; i++) {
          const bar = document.createElement("span");
          bar.className = "w-[2px] h-2 bg-[#13c81c]";
          box.appendChild(bar);
        }
      }

      drawHorizontalRuler();
      drawVerticalRuler();
      drawLevels(8);
    </script>
  </body>
</html>
